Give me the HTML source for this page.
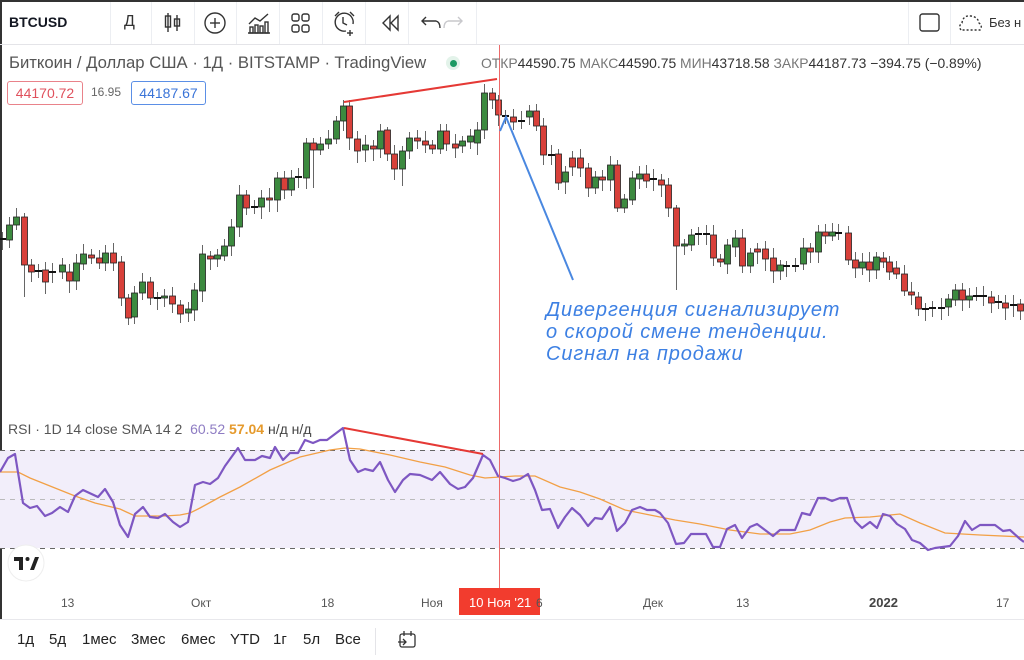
<!DOCTYPE html>
<html><head><meta charset="utf-8">
<style>
html,body{margin:0;padding:0;width:1024px;height:660px;overflow:hidden;background:#fff;font-family:"Liberation Sans","DejaVu Sans",sans-serif;}
#wrap{position:relative;width:1024px;height:660px;}
.t{position:absolute;white-space:nowrap;}
</style></head><body><div id="wrap">
<svg id="s" width="1024" height="660" style="position:absolute;left:0;top:0" xmlns="http://www.w3.org/2000/svg">
<rect x="0" y="0" width="1024" height="2" fill="#333"/>
<rect x="0" y="0" width="2" height="620" fill="#333"/>
<line x1="0" y1="44.5" x2="1024" y2="44.5" stroke="#e4e4e8"/>
<g stroke="#eceef2">
<line x1="110.5" y1="2" x2="110.5" y2="44"/><line x1="151.5" y1="2" x2="151.5" y2="44"/><line x1="194.5" y1="2" x2="194.5" y2="44"/><line x1="236.5" y1="2" x2="236.5" y2="44"/><line x1="279.5" y1="2" x2="279.5" y2="44"/><line x1="322.5" y1="2" x2="322.5" y2="44"/><line x1="365.5" y1="2" x2="365.5" y2="44"/><line x1="408.5" y1="2" x2="408.5" y2="44"/><line x1="476.5" y1="2" x2="476.5" y2="44"/><line x1="908.5" y1="2" x2="908.5" y2="44"/><line x1="950.5" y1="2" x2="950.5" y2="44"/>
</g>
<g fill="none" stroke="#333" stroke-width="1.4">
<line x1="168" y1="13" x2="168" y2="32"/><rect x="165.5" y="16" width="5" height="11"/><line x1="177" y1="15" x2="177" y2="31"/><rect x="174.5" y="19" width="5" height="7"/>
<circle cx="215" cy="23" r="10"/><line x1="215" y1="18" x2="215" y2="28"/><line x1="210" y1="23" x2="220" y2="23"/>
<polyline points="249,24 255,18 260,21 268,14"/><rect x="250" y="27" width="3" height="6"/><rect x="255" y="25" width="3" height="8"/><rect x="260" y="26" width="3" height="7"/><rect x="265" y="22" width="3" height="11"/><line x1="248" y1="33" x2="270" y2="33"/>
<rect x="292" y="14" width="7" height="7" rx="2"/><rect x="302" y="14" width="7" height="7" rx="2"/><rect x="292" y="25" width="7" height="7" rx="2"/><rect x="302" y="25" width="7" height="7" rx="2"/>
<path d="M346 31 A9 9 0 1 1 353 24"/><polyline points="343,17 343,23 347,25"/><path d="M335 16 L339 12 M350 12 L354 16"/><line x1="350" y1="30" x2="350" y2="36"/><line x1="347" y1="33" x2="353" y2="33"/>
<path d="M390 16 L383 23 L390 30 Z M398 16 L391 23 L398 30 Z"/>
<path d="M422 21 L436 21 Q440 22 440 28 M426 17 L422 21 L426 25"/>
<path d="M448 21 L462 21 M458 17 L462 21 L458 25 M448 21 Q444 22 444 28" stroke="#c8c8cc"/>
<rect x="920" y="14" width="19" height="17" rx="2.5"/>
<path d="M961 30 Q958 26 962 23 Q963 15 971 16 Q978 17 979 23 Q983 26 980 30 Z" stroke-dasharray="2 2"/>
</g>

<rect x="0" y="450" width="1024" height="98" fill="#f2eefa"/>
<line x1="0" y1="450.5" x2="1024" y2="450.5" stroke="#666" stroke-dasharray="5 5"/>
<line x1="0" y1="499.5" x2="1024" y2="499.5" stroke="#bbb" stroke-dasharray="5 5"/>
<line x1="0" y1="548.5" x2="1024" y2="548.5" stroke="#666" stroke-dasharray="5 5"/>

<g id="candles"></g>

<polyline fill="none" stroke="#f2a046" stroke-width="1.3" points="0,472 18,472 30,478 60,490 75,496 95,503 120,509 135,516 165,516 180,515 190,513 200,508 220,497 240,487 270,470 300,457 330,450 345,448 360,449 390,455 420,462 445,467 470,475 485,478 500,477 515,476 535,476 560,487 580,492 600,499 625,510 650,515 675,520 700,524 730,530 760,534 790,534 810,530 830,522 845,518 870,517 900,514 920,523 945,533 980,535 1024,537"/>
<polyline fill="none" stroke="#7e57c2" stroke-width="2.2" stroke-linejoin="round" points="0,472 8,458 15,454 23,503 30,508 37,506 45,516 52,513 60,507 68,512 75,496 83,490 98,497 105,489 113,502 120,525 128,537 135,514 143,507 150,517 158,518 165,514 173,522 180,527 188,522 195,485 203,482 210,484 218,478 225,466 238,448 245,460 255,460 262,456 270,458 275,447 283,460 290,453 298,453 305,440 313,443 320,440 327,440 335,434 343,428 350,460 358,472 365,469 373,471 380,462 388,480 395,492 403,480 410,474 420,475 432,480 440,472 450,484 458,489 465,487 473,478 483,455 490,460 498,476 505,478 513,481 520,479 528,474 535,490 542,510 550,509 558,528 565,517 572,508 580,515 588,526 595,518 602,519 610,507 617,531 625,523 632,510 640,507 647,510 655,510 660,513 668,523 676,544 684,543 691,534 698,534 706,534 713,547 720,547 727,529 735,525 742,538 750,527 757,524 765,530 773,536 780,530 795,530 802,513 810,515 818,498 825,498 832,501 840,498 847,498 855,521 862,528 870,522 877,528 883,514 890,516 897,524 905,529 912,540 920,543 928,550 935,548 950,546 958,536 965,521 972,530 980,525 995,525 1003,531 1010,530 1020,539 1024,542"/>

<line x1="499.5" y1="45" x2="499.5" y2="588" stroke="#ec6a6a" stroke-width="1"/>
<line x1="344" y1="102" x2="497" y2="79" stroke="#e53935" stroke-width="2"/>
<line x1="344" y1="428" x2="483" y2="454" stroke="#e53935" stroke-width="2"/>
<polyline fill="none" stroke="#4a88e0" stroke-width="2" points="500,131 506,117 573,280"/>

<circle cx="26" cy="563" r="18" fill="#fff" stroke="#eee"/>
<path d="M14 557 H23 V570 H19 V561 H14 Z M30 570 L35 557 H39 L34 570 Z" fill="#222"/>
<circle cx="27.5" cy="559" r="2" fill="#222"/>

<line x1="0" y1="619.5" x2="1024" y2="619.5" stroke="#e8e8ec"/>
<rect x="459" y="588" width="81" height="27" fill="#f23c2e"/>
<line x1="375.5" y1="628" x2="375.5" y2="655" stroke="#e4e4e8"/>
<g fill="none" stroke="#333" stroke-width="1.3"><rect x="400" y="634" width="15" height="13" rx="2"/><line x1="404" y1="631" x2="404" y2="636"/><line x1="411" y1="631" x2="411" y2="636"/><path d="M398 642 H406 M403 639 L406 642 L403 645"/></g>
</svg>

<div class="t" style="left:9px;top:14px;font-size:14px;font-weight:bold;color:#131722">BTCUSD</div>
<div class="t" style="left:124px;top:13px;font-size:16px;color:#333">Д</div>
<div class="t" style="left:989px;top:15px;font-size:13px;color:#333">Без н</div>

<div class="t" style="left:9px;top:53px;font-size:16.7px;color:#555">Биткоин / Доллар США · 1Д · BITSTAMP · TradingView</div>
<div class="t" style="left:446px;top:56px;width:14px;height:14px;border-radius:7px;background:#e3f3ea"></div>
<div class="t" style="left:450px;top:60px;width:7px;height:7px;border-radius:4px;background:#1c9a63"></div>
<div class="t" style="left:481px;top:55px;font-size:13.9px;color:#777">ОТКР<span style="color:#333">44590.75</span> МАКС<span style="color:#333">44590.75</span> МИН<span style="color:#333">43718.58</span> ЗАКР<span style="color:#333">44187.73</span> <span style="color:#333">−394.75 (−0.89%)</span></div>

<div class="t" style="left:7px;top:81px;width:74px;height:22px;border:1px solid #e9828a;border-radius:3px;color:#e0515d;font-size:14px;line-height:22px;text-align:center">44170.72</div>
<div class="t" style="left:91px;top:85px;font-size:12px;color:#666">16.95</div>
<div class="t" style="left:131px;top:81px;width:73px;height:22px;border:1px solid #5b8fe6;border-radius:3px;color:#3a74d8;font-size:14px;line-height:22px;text-align:center">44187.67</div>

<div class="t" style="left:546px;top:299px;font-size:20px;letter-spacing:0.9px;font-style:italic;color:#3d80e3;line-height:22px">Дивергенция сигнализирует<br>о скорой смене тенденции.<br>Сигнал на продажи</div>

<div class="t" style="left:8px;top:421px;font-size:14px;color:#555">RSI · 1D 14 close SMA 14 2 &nbsp;<span style="color:#8e7cc3">60.52</span> <span style="color:#e59a2c;font-weight:bold">57.04</span> <span style="color:#444">н/д н/д</span></div>

<div class="t" style="left:61px;top:596px;font-size:12px;color:#555">13</div>
<div class="t" style="left:191px;top:596px;font-size:12px;color:#555">Окт</div>
<div class="t" style="left:321px;top:596px;font-size:12px;color:#555">18</div>
<div class="t" style="left:421px;top:596px;font-size:12px;color:#555">Ноя</div>
<div class="t" style="left:536px;top:596px;font-size:12px;color:#555">6</div>
<div class="t" style="left:469px;top:595px;font-size:13px;color:#fff">10 Ноя '21</div>
<div class="t" style="left:643px;top:596px;font-size:12px;color:#555">Дек</div>
<div class="t" style="left:736px;top:596px;font-size:12px;color:#555">13</div>
<div class="t" style="left:869px;top:595px;font-size:13px;font-weight:bold;color:#444">2022</div>
<div class="t" style="left:996px;top:596px;font-size:12px;color:#555">17</div>

<div class="t" style="left:17px;top:631px;font-size:15px;color:#222">1д</div>
<div class="t" style="left:49px;top:631px;font-size:15px;color:#222">5д</div>
<div class="t" style="left:82px;top:631px;font-size:15px;color:#222">1мес</div>
<div class="t" style="left:131px;top:631px;font-size:15px;color:#222">3мес</div>
<div class="t" style="left:181px;top:631px;font-size:15px;color:#222">6мес</div>
<div class="t" style="left:230px;top:631px;font-size:15px;color:#222">YTD</div>
<div class="t" style="left:273px;top:631px;font-size:15px;color:#222">1г</div>
<div class="t" style="left:303px;top:631px;font-size:15px;color:#222">5л</div>
<div class="t" style="left:335px;top:631px;font-size:15px;color:#222">Все</div>
</div>
<script>
var d=[[2,'d',239,239],[9,'g',225,240],[16,'g',217,225],[24,'r',217,265],[31,'r',265,272],[38,'d',271,271],[45,'r',270,282],[52,'d',272,274],[62,'g',265,272],[69,'r',272,281],[76,'g',263,281],[83,'g',254,264],[91,'r',255,258],[99,'r',258,263],[105,'g',253,263],[113,'r',253,263],[121,'r',262,298],[128,'r',298,318],[134,'g',293,317],[142,'g',282,293],[150,'r',282,298],[157,'d',298,298],[164,'g',296,298],[172,'r',296,304],[180,'r',305,314],[188,'g',309,313],[194,'g',290,310],[202,'g',254,291],[210,'r',256,259],[217,'g',255,259],[224,'g',246,256],[231,'g',227,246],[239,'g',195,227],[246,'r',195,208],[254,'d',207,207],[261,'g',198,207],[269,'r',198,200],[277,'g',178,200],[284,'r',178,190],[291,'g',178,190],[298,'d',177,177],[306,'g',143,178],[313,'r',143,150],[320,'g',144,150],[328,'g',139,144],[336,'g',121,139],[343,'g',106,121],[349,'r',106,138],[357,'r',139,151],[365,'g',145,150],[373,'r',146,149],[380,'g',131,149],[387,'r',130,154],[394,'r',154,169],[402,'g',151,169],[409,'g',138,151],[417,'r',138,141],[425,'r',141,145],[432,'r',145,149],[440,'g',131,149],[446,'r',131,144],[455,'r',144,148],[462,'g',141,146],[470,'g',136,142],[477,'g',130,143],[484,'g',93,130],[492,'r',93,100],[498,'r',100,115],[505,'d',116,116],[513,'r',117,122],[521,'d',121,121],[529,'g',111,117],[536,'r',111,126],[543,'r',126,155],[551,'d',155,155],[558,'r',154,183],[565,'g',172,182],[572,'r',158,167],[580,'r',158,168],[588,'r',168,188],[595,'g',177,188],[602,'r',177,180],[610,'g',165,180],[617,'r',165,208],[624,'g',199,208],[632,'g',178,200],[639,'g',174,179],[646,'r',174,181],[653,'d',179,179],[661,'r',180,185],[668,'r',185,208],[676,'r',208,246],[684,'g',244,246],[691,'g',235,245],[698,'d',234,234],[706,'d',234,234],[713,'r',235,258],[720,'r',259,262],[727,'g',245,264],[735,'g',238,247],[742,'r',238,266],[750,'g',253,266],[757,'r',249,252],[765,'r',249,259],[773,'r',258,271],[780,'g',265,271],[786,'d',266,266],[795,'d',266,266],[803,'g',248,264],[810,'r',248,252],[818,'g',232,252],[825,'r',232,236],[832,'g',232,236],[838,'d',233,233],[848,'r',233,260],[855,'r',260,268],[862,'g',262,268],[869,'r',262,270],[876,'g',257,270],[883,'r',258,262],[889,'r',262,272],[896,'r',268,274],[904,'r',274,291],[911,'r',292,295],[918,'r',297,309],[925,'d',309,309],[932,'d',308,308],[941,'d',308,308],[948,'g',299,307],[955,'g',290,300],[962,'r',290,300],[969,'g',296,300],[976,'d',296,296],[983,'d',296,296],[991,'r',297,303],[998,'d',302,302],[1005,'r',303,308],[1013,'d',305,305],[1020,'r',304,311]];
var long={24:[213,297],128:[294,325],402:[146,186],676:[205,290],387:[127,161],313:[138,188],617:[160,212]};
var g=document.getElementById('candles'),h='';
d.forEach(function(c){var x=c[0],t=c[2],b=c[3],hi=t-5-(x*7%6),lo=b+5+(x*3%8);if(long[x]){hi=long[x][0];lo=long[x][1];}
h+='<line x1="'+(x+.5)+'" y1="'+hi+'" x2="'+(x+.5)+'" y2="'+lo+'" stroke="#666" stroke-width="1"/>';
if(c[1]=='d'){h+='<rect x="'+(x-3)+'" y="'+(t-1)+'" width="7" height="2" fill="#111"/>';}
else{var f=c[1]=='g'?'#3c8a3f':'#d8403a';h+='<rect x="'+(x-2.5)+'" y="'+t+'" width="6" height="'+Math.max(2,b-t)+'" fill="'+f+'" stroke="#222" stroke-width="0.8"/>';}
});
g.innerHTML=h;
</script>
</body></html>
